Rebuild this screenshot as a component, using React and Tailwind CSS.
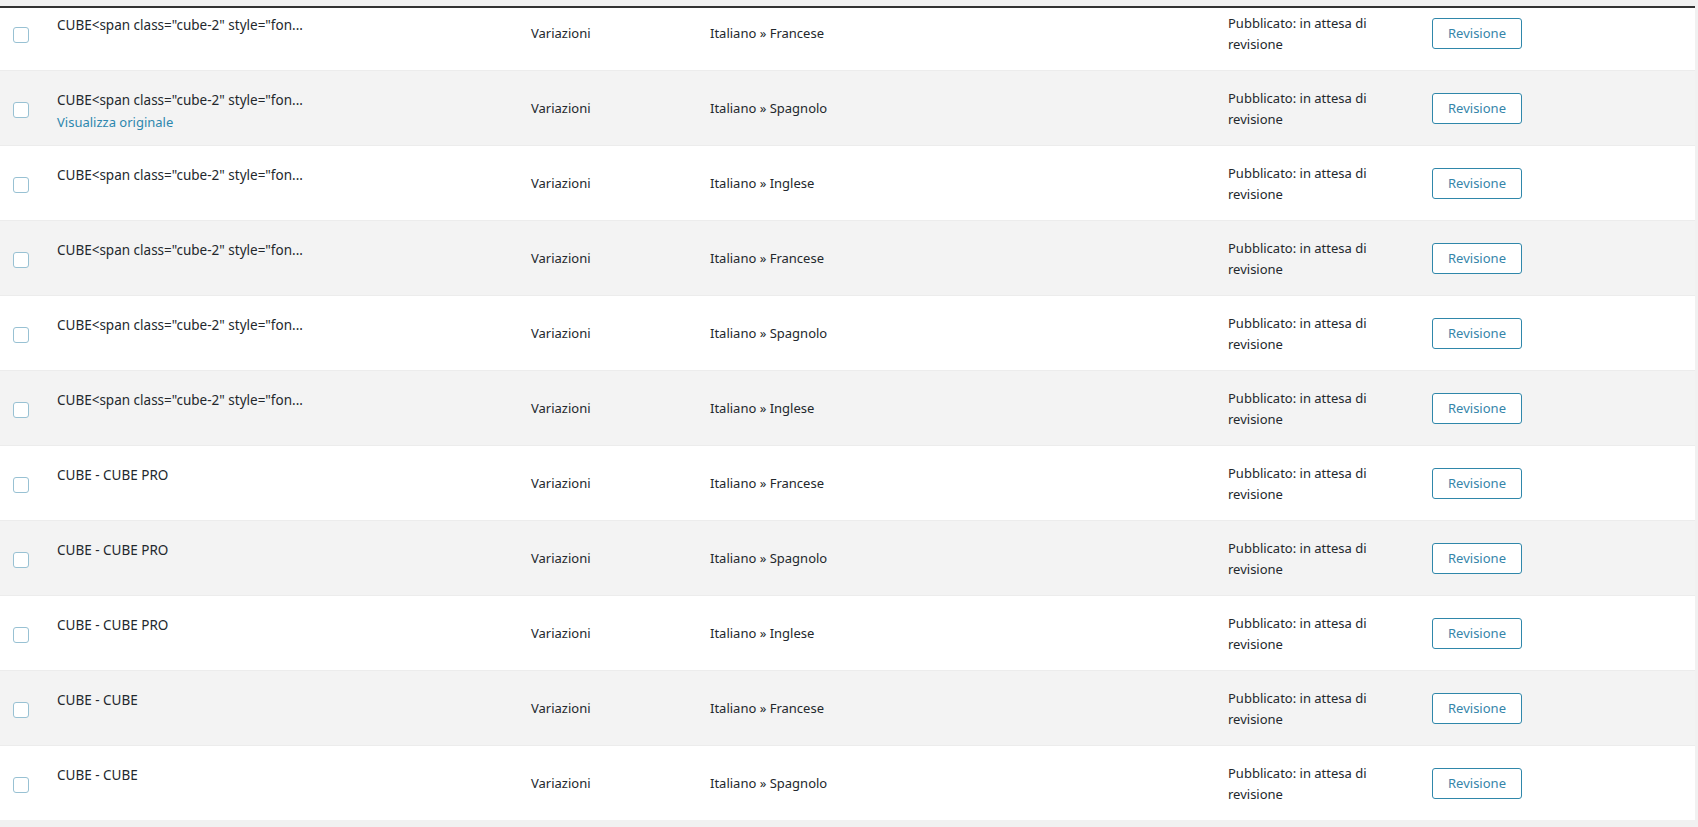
import React from "react";

const SPAN = 'CUBE<span class="cube-2" style="fon...';

const rows = [
  { title: SPAN, lang: "Francese" },
  { title: SPAN, lang: "Spagnolo", original: true },
  { title: SPAN, lang: "Inglese" },
  { title: SPAN, lang: "Francese" },
  { title: SPAN, lang: "Spagnolo" },
  { title: SPAN, lang: "Inglese" },
  { title: "CUBE - CUBE PRO", lang: "Francese" },
  { title: "CUBE - CUBE PRO", lang: "Spagnolo" },
  { title: "CUBE - CUBE PRO", lang: "Inglese" },
  { title: "CUBE - CUBE", lang: "Francese" },
  { title: "CUBE - CUBE", lang: "Spagnolo" },
];

function Row({ row, index }) {
  const striped = index % 2 === 1;
  return (
    <div
      className={
        "grid h-[75px] grid-cols-[57px_474px_179px_518px_204px_1fr] border-b border-[#ececec] " +
        (striped ? "bg-[#f3f3f3]" : "bg-white")
      }
    >
      <div className="pl-[13px] pt-[31px]">
        <div className="h-4 w-4 rounded-[3px] border border-[#98c1d3] bg-white" />
      </div>
      <div className="pt-[19px] leading-[21px]">
        <div className="whitespace-nowrap text-[13.5px] text-[#23282d]">{row.title}</div>
        {row.original && (
          <div className="pt-px text-[#2d87ae]">Visualizza originale</div>
        )}
      </div>
      <div className="flex items-center pt-[2px] text-[#23282d]">Variazioni</div>
      <div className="flex items-center pt-[2px] text-[#23282d]">Italiano » {row.lang}</div>
      <div className="flex items-center pt-[2px]">
        <div className="w-[180px] leading-[21px] text-[#23282d]">Pubblicato: in attesa di revisione</div>
      </div>
      <div className="flex items-center">
        <button className="flex h-[31px] w-[90px] items-center justify-center rounded-[3px] border border-[#2f87aa] bg-white pt-px text-[13px] text-[#3585aa]">
          Revisione
        </button>
      </div>
    </div>
  );
}

export default function App() {
  return (
    <div
      className="h-[827px] w-full overflow-hidden bg-[#f1f1f1] text-[13px]"
      style={{ fontFamily: '"Noto Sans", "Open Sans", sans-serif' }}
    >
      <div className="h-[6px]" />
      <div className="h-[2px] w-[1695px] bg-[#333333]" />
      <div className="h-[812px] w-[1695px] overflow-hidden">
        <div className="-mt-[12px]">
          {rows.map((r, i) => (
            <Row key={i} row={r} index={i} />
          ))}
        </div>
      </div>
    </div>
  );
}
